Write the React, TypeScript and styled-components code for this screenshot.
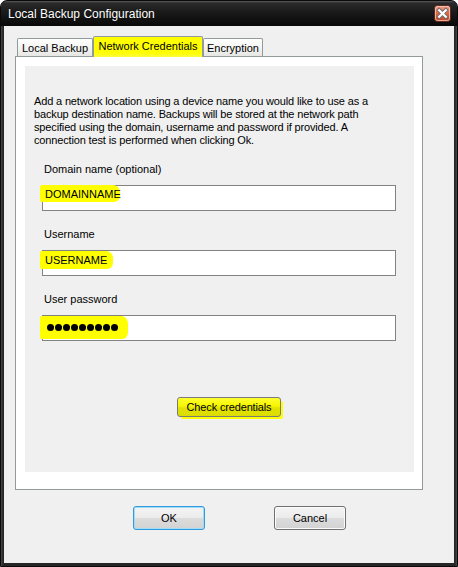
import { FC } from 'react';
import styled, { createGlobalStyle } from 'styled-components';

const GlobalStyle = createGlobalStyle`
  html, body {
    margin: 0;
    padding: 0;
    background: #ffffff;
  }
  body {
    font-family: "Liberation Sans", Arial, sans-serif;
    font-size: 11px;
    color: #000;
  }
`;

const MARKER = '#ffff00';

const Window = styled.div`
  width: 458px;
  height: 567px;
  box-sizing: border-box;
  display: flex;
  flex-direction: column;
  border: 1px solid #0a0a0a;
  border-radius: 7px 7px 0 0;
  background: linear-gradient(to right, #4a4a4a, #262626 2px, #262626 calc(100% - 2px), #4a4a4a);
  padding: 0 3px 3px 3px;
  overflow: hidden;
`;

const TitleBar = styled.div`
  height: 25px;
  margin: 0 -3px;
  padding: 0 6px 0 7px;
  display: flex;
  align-items: center;
  justify-content: space-between;
  background: linear-gradient(to bottom, #5c5c5c 0, #2a2a2a 2px, #1a1a1a 45%, #080808 100%);
  border-radius: 6px 6px 0 0;
`;

const Title = styled.span`
  color: #ffffff;
  font-size: 12px;
  text-shadow: 0 0 1px rgba(0, 0, 0, 0.6);
`;

const Client = styled.div`
  flex: 1;
  background: #f0f0f0;
  padding: 10px 0 0 11px;
  display: flex;
  flex-direction: column;
`;

const TabRow = styled.div`
  height: 20px;
  padding-left: 2px;
  display: flex;
  align-items: flex-end;
`;

const Tab = styled.div<{ $active?: boolean; $w: number }>`
  position: relative;
  z-index: ${(p) => (p.$active ? 2 : 1)};
  box-sizing: border-box;
  width: ${(p) => p.$w}px;
  height: ${(p) => (p.$active ? 21 : 18)}px;
  margin-bottom: ${(p) => (p.$active ? -1 : 0)}px;
  border: 1px solid #919b9c;
  border-bottom: none;
  border-radius: 2px 2px 0 0;
  background: ${(p) =>
    p.$active
      ? `linear-gradient(to bottom, ${MARKER} 0, ${MARKER} 78%, #fbfb40 100%)`
      : 'linear-gradient(to bottom, #ffffff, #f2f2f0 60%, #e6e6e2)'};
  display: flex;
  align-items: ${(p) => (p.$active ? 'flex-start' : 'center')};
  padding-top: ${(p) => (p.$active ? 3 : 0)}px;
  justify-content: center;
  white-space: nowrap;
`;

const Panel = styled.div`
  box-sizing: border-box;
  width: 408px;
  height: 434px;
  border: 1px solid #919b9c;
  background: #ffffff;
  padding: 9px 8px 17px 9px;
`;

const Form = styled.div`
  width: 389px;
  height: 406px;
  background: #f0f0f0;
  box-sizing: border-box;
  padding-top: 29px;
  display: flex;
  flex-direction: column;
`;

const Intro = styled.p`
  margin: 0 0 16px 9px;
  line-height: 13px;
  letter-spacing: -0.15px;
  white-space: nowrap;
`;

const Group = styled.div`
  display: flex;
  flex-direction: column;
  margin-bottom: 17px;
`;

const Label = styled.label`
  margin-left: 19px;
  line-height: 13px;
  margin-bottom: 9px;
`;

const Field = styled.div`
  box-sizing: border-box;
  margin-left: 17px;
  width: 354px;
  height: 26px;
  border: 1px solid #838383;
  background: #ffffff;
  display: flex;
  align-items: flex-start;
`;

const Marker = styled.span<{ $w: number; $h: number; $top?: number }>`
  box-sizing: border-box;
  display: inline-flex;
  align-items: center;
  width: ${(p) => p.$w}px;
  height: ${(p) => p.$h}px;
  margin: ${(p) => p.$top ?? 0}px 0 0 -3px;
  padding-left: 5px;
  background: ${MARKER};
  border-radius: 2px 7px 6px 2px;
  white-space: nowrap;
`;

const Caret = styled.span`
  display: inline-block;
  width: 1px;
  height: 13px;
  margin-left: 1px;
  background: #000;
`;

const Dots = styled.span`
  display: inline-flex;
  gap: 1px;
  margin-left: 2px;
`;

const Dot = styled.span`
  width: 7px;
  height: 7px;
  border-radius: 50%;
  background: #000;
`;

const CheckButton = styled.button`
  box-sizing: border-box;
  margin: 39px 0 0 152px;
  width: 104px;
  height: 20px;
  padding: 0;
  border: 1px solid #7b7b7b;
  border-radius: 3px;
  background: linear-gradient(to bottom, #ffff30 0, #f6f600 45%, #e2e200 55%, #dcdc00 100%);
  font-family: inherit;
  font-size: 11px;
  letter-spacing: -0.15px;
  color: #000;
  box-shadow: 3px 3px 0 -1px ${MARKER};
`;

const ButtonRow = styled.div`
  display: flex;
  gap: 69px;
  padding: 16px 0 0 118px;
`;

const DialogButton = styled.button<{ $default?: boolean }>`
  box-sizing: border-box;
  width: 72px;
  height: 24px;
  padding: 0;
  border: 1px solid ${(p) => (p.$default ? '#3399dd' : '#707070')};
  border-radius: 3px;
  background: linear-gradient(to bottom, #f4f4f4 0, #ececec 48%, #dcdcdc 52%, #d2d2d2 100%);
  box-shadow: ${(p) => (p.$default ? 'inset 0 0 0 1px #9fdcf8' : 'inset 0 0 0 1px #fbfbfb')};
  font-family: inherit;
  font-size: 11px;
  color: #000;
`;

const CloseIcon: FC = () => (
  <svg width="17" height="17" viewBox="0 0 17 17">
    <defs>
      <linearGradient id="closeFill" x1="0" y1="0" x2="0" y2="1">
        <stop offset="0" stopColor="#f2a38f" />
        <stop offset="0.45" stopColor="#e0694b" />
        <stop offset="1" stopColor="#c4401f" />
      </linearGradient>
    </defs>
    <rect x="0.5" y="0.5" width="16" height="16" rx="3" fill="url(#closeFill)" stroke="#5a2a20" />
    <rect x="1.5" y="1.5" width="14" height="14" rx="2" fill="none" stroke="#f7c6b8" strokeOpacity="0.8" />
    <path d="M5.2 5.2 L11.8 11.8 M11.8 5.2 L5.2 11.8" stroke="#6b6b6b" strokeWidth="4" strokeLinecap="square" />
    <path d="M5.2 5.2 L11.8 11.8 M11.8 5.2 L5.2 11.8" stroke="#ffffff" strokeWidth="2.2" strokeLinecap="square" />
  </svg>
);

const App: FC = () => {
  return (
    <>
      <GlobalStyle />
      <Window>
        <TitleBar>
          <Title>Local Backup Configuration</Title>
          <CloseIcon />
        </TitleBar>
        <Client>
          <TabRow>
            <Tab $w={76}>Local Backup</Tab>
            <Tab $w={110} $active>
              Network Credentials
            </Tab>
            <Tab $w={60}>Encryption</Tab>
          </TabRow>
          <Panel>
            <Form>
              <Intro>
                Add a network location using a device name you would like to use as a
                <br />
                backup destination name. Backups will be stored at the network path
                <br />
                specified using the domain, username and password if provided. A
                <br />
                connection test is performed when clicking Ok.
              </Intro>
              <Group>
                <Label>Domain name (optional)</Label>
                <Field>
                  <Marker $w={80} $h={17} $top={-1}>
                    DOMAINNAME
                    <Caret />
                  </Marker>
                </Field>
              </Group>
              <Group>
                <Label>Username</Label>
                <Field>
                  <Marker $w={73} $h={18}>
                    USERNAME
                  </Marker>
                </Field>
              </Group>
              <Group>
                <Label>User password</Label>
                <Field>
                  <Marker $w={88} $h={23}>
                    <Dots>
                      {Array.from({ length: 9 }).map((_, i) => (
                        <Dot key={i} />
                      ))}
                    </Dots>
                  </Marker>
                </Field>
              </Group>
              <CheckButton>Check credentials</CheckButton>
            </Form>
          </Panel>
          <ButtonRow>
            <DialogButton $default>OK</DialogButton>
            <DialogButton>Cancel</DialogButton>
          </ButtonRow>
        </Client>
      </Window>
    </>
  );
};

export default App;
